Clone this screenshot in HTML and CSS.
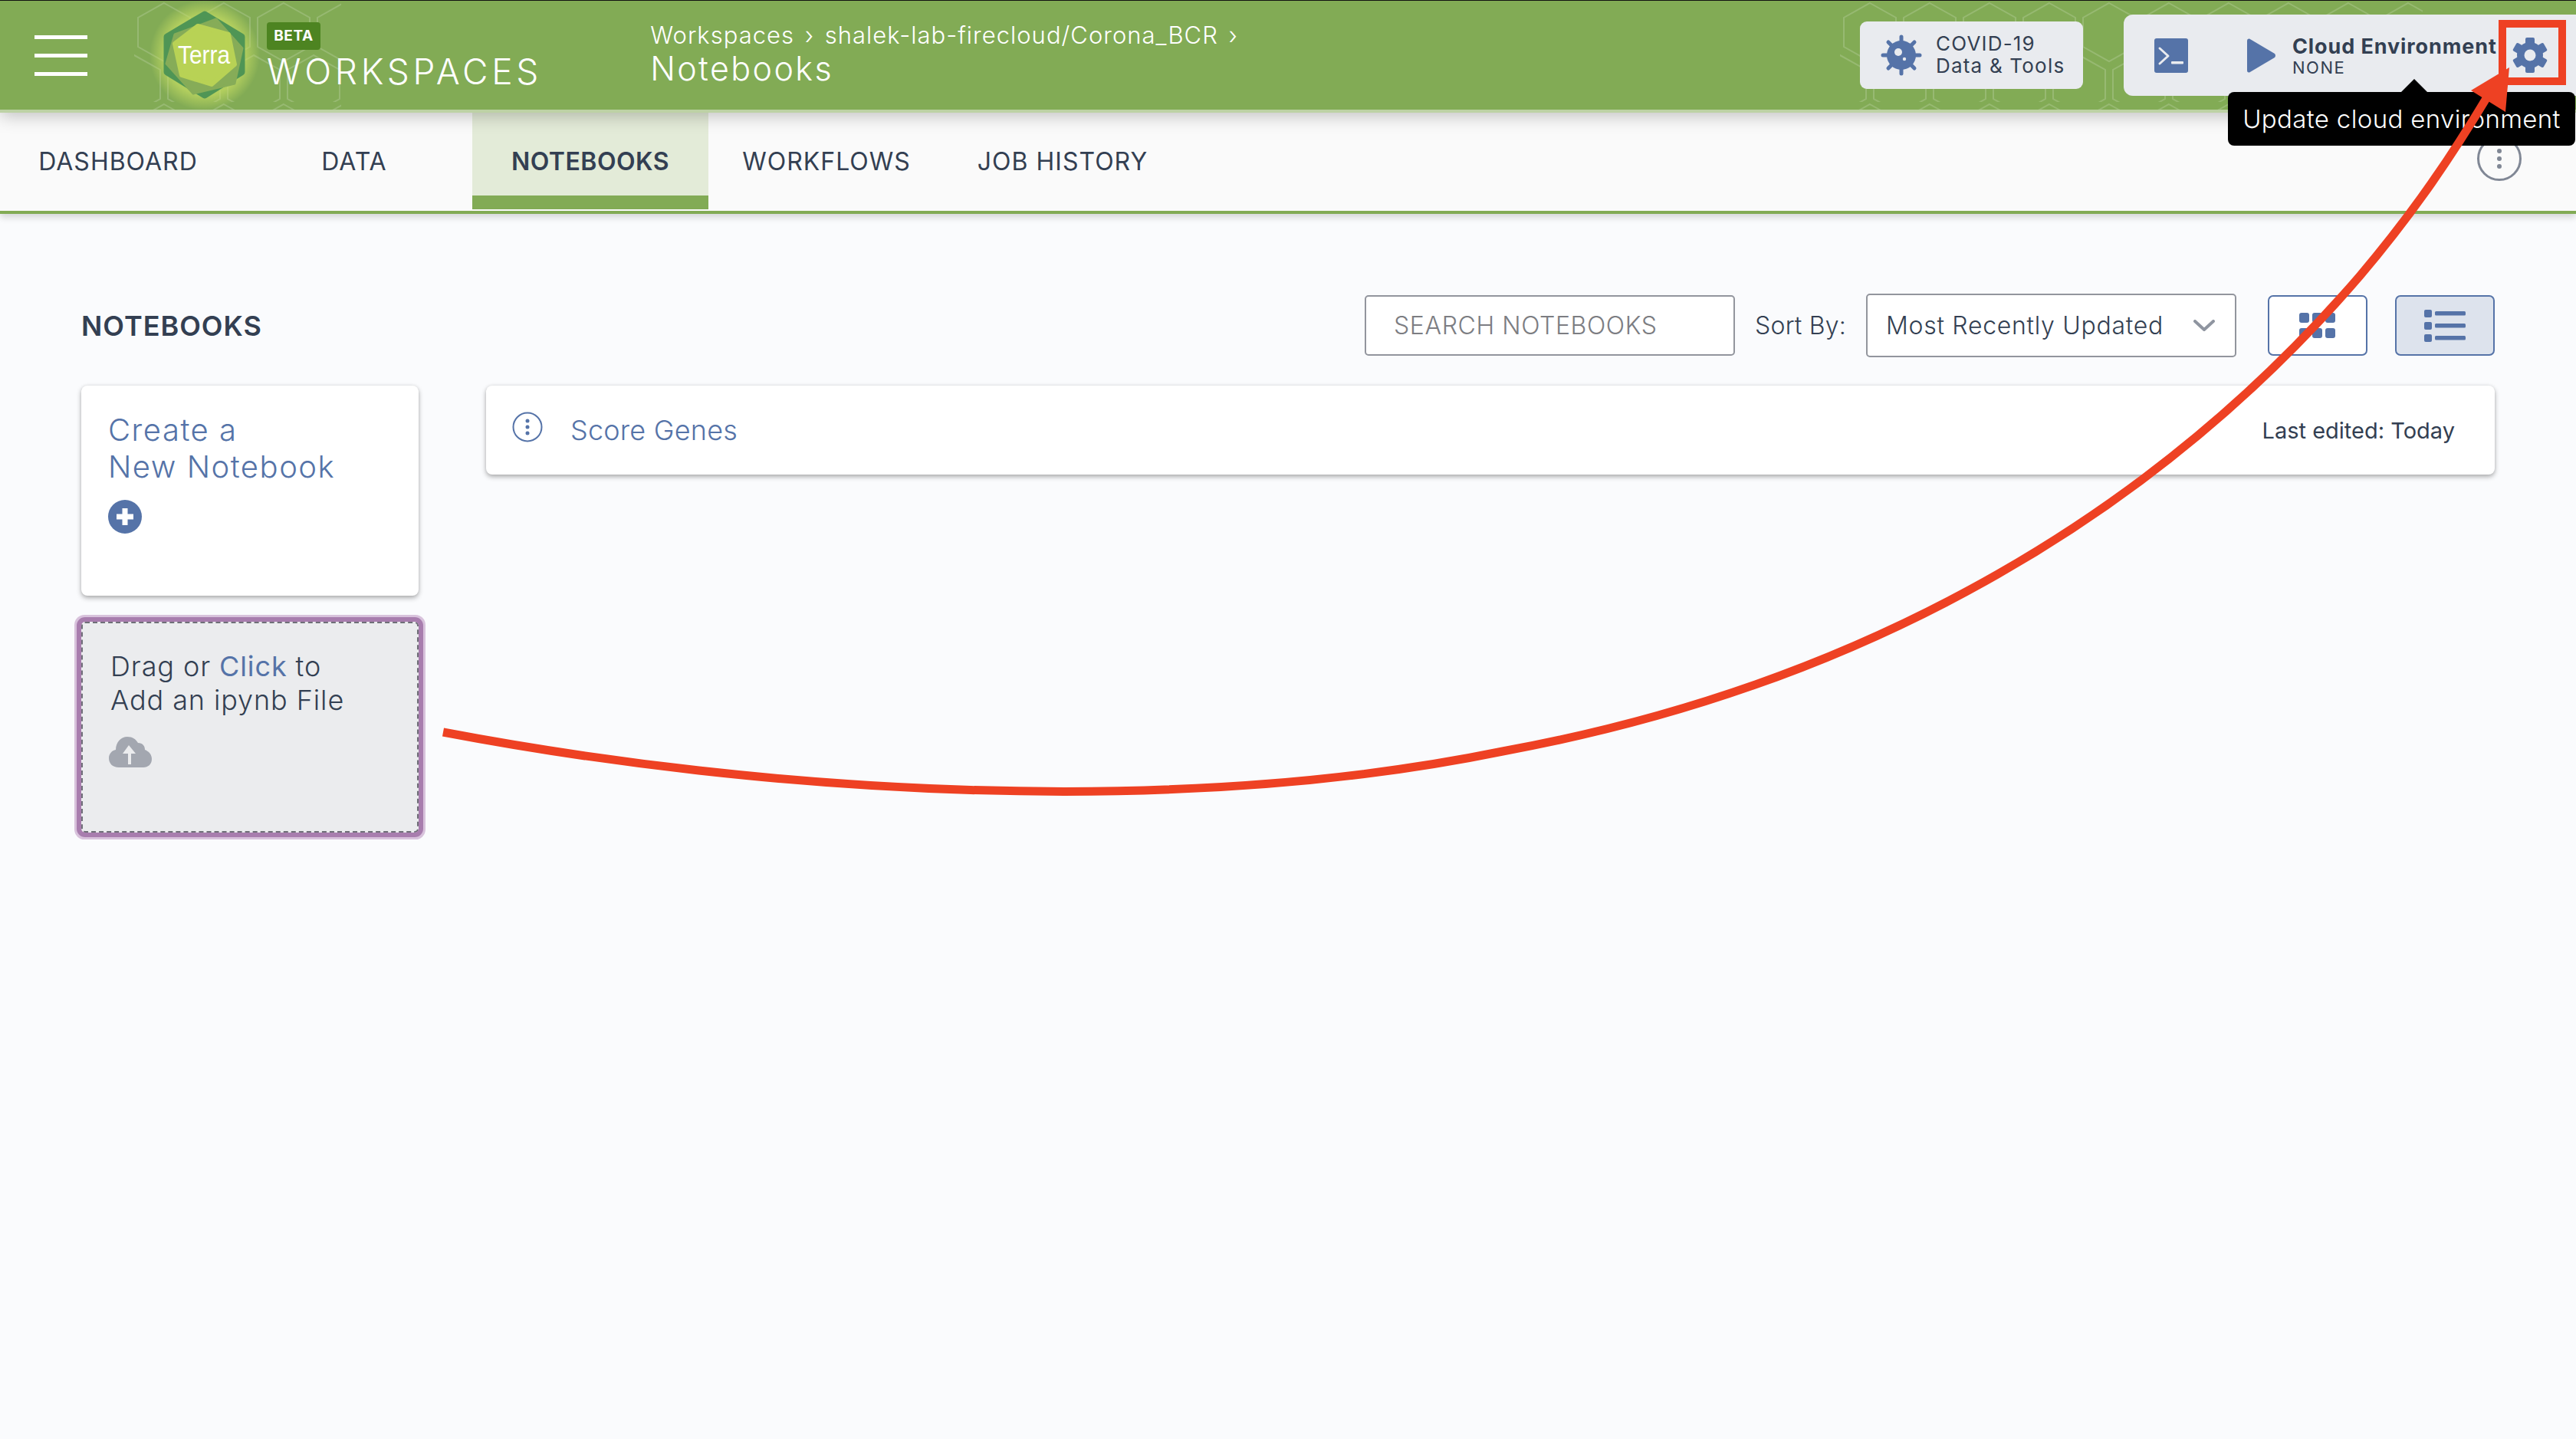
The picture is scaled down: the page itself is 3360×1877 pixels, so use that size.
FILE: index.html
```html
<!DOCTYPE html>
<html lang="en">
<head>
  <meta charset="UTF-8">
  <title>Notebooks</title>
  <link rel="stylesheet" href="styles.css">
</head>
<body>
  <header class="topbar">
    <svg class="hexes hexes-left" viewBox="0 0 270 142"><rect width="270" height="142" fill="url(#hexfill)"/></svg>
    <svg class="hexes hexes-right" viewBox="0 0 760 142"><rect width="760" height="142" fill="url(#hexfill)"/></svg>

    <div class="burger"><span></span><span></span><span></span></div>

    <svg class="logo" viewBox="214 13 106 116">
      <defs>
        <radialGradient id="glow">
          <stop offset="0.72" stop-color="#c6dd62" stop-opacity="0.7"/>
          <stop offset="1" stop-color="#c6dd62" stop-opacity="0"/>
        </radialGradient>
      </defs>
      <circle cx="267" cy="71" r="72" fill="url(#glow)"/>
      <polygon points="267,18 315,47 315,93 267,123 218,93 218,47" fill="#4f9555" stroke="#4f9555" stroke-width="9" stroke-linejoin="round"/>
      <polygon points="228,44 282,24 316,62 306,108 252,121 217,82" fill="#86ac58" stroke="#86ac58" stroke-width="3" stroke-linejoin="round"/>
      <polygon points="258,33 298,44 306,83 276,109 237,97 228,56" fill="#b8d255" stroke="#b8d255" stroke-width="6" stroke-linejoin="round"/>
      <text class="logo-word" x="232" y="82" textLength="68" lengthAdjust="spacingAndGlyphs">Terra</text>
    </svg>

    <div class="brand">
      <span class="beta">BETA</span>
      <span class="brand-name">WORKSPACES</span>
    </div>

    <div class="crumbs">
      <div class="crumb-path">Workspaces <span class="sep">›</span> shalek-lab-firecloud/Corona_BCR <span class="sep">›</span></div>
      <div class="crumb-page">Notebooks</div>
    </div>

    <a class="covid-btn">
      <svg class="virus" viewBox="0 0 54 54">
        <g stroke="#5573a8" stroke-width="5" stroke-linecap="round">
          <path d="M27 3V51M3 27H51M10 10L44 44M44 10L10 44"/>
        </g>
        <circle cx="27" cy="27" r="19" fill="#5573a8"/>
        <circle cx="23" cy="23" r="5" fill="#e9ebef"/>
        <circle cx="31" cy="32" r="2.2" fill="#e9ebef"/>
      </svg>
      <div class="covid-text">COVID-19<br>Data &amp; Tools</div>
    </a>

    <div class="cloud-panel">
      <svg class="terminal" viewBox="0 0 44 45">
        <rect width="44" height="45" rx="3" fill="#5573a8"/>
        <path d="M7 13L18 23L7 33" fill="none" stroke="#e9ebef" stroke-width="3" stroke-linecap="round" stroke-linejoin="round"/>
        <rect x="22" y="30" width="16" height="3.5" rx="1" fill="#e9ebef"/>
      </svg>
      <svg class="play" viewBox="0 0 38 45"><path d="M3 0.5 L36 20 Q38 22.500 36 25 L3 44.500 Q0 45 0 42 V3 Q0 0 3 0.5Z" fill="#5573a8"/></svg>
      <div class="cloud-text">
        <div class="cloud-title">Cloud Environment</div>
        <div class="cloud-status">NONE</div>
      </div>
      <svg class="gear" viewBox="-24 -24 48 48">
        <g fill="#5573a8">
          <circle r="17"/>
          <rect x="-6" y="-23" width="12" height="46" rx="2"/>
          <rect x="-6" y="-23" width="12" height="46" rx="2" transform="rotate(60)"/>
          <rect x="-6" y="-23" width="12" height="46" rx="2" transform="rotate(120)"/>
        </g>
        <circle r="7.500" fill="#e9ebef"/>
      </svg>
    </div>
  </header>

  <nav class="tabs">
    <a class="tab">DASHBOARD</a>
    <a class="tab">DATA</a>
    <a class="tab active">NOTEBOOKS</a>
    <a class="tab">WORKFLOWS</a>
    <a class="tab">JOB HISTORY</a>
    <div class="tab-menu"><i></i><i></i><i></i></div>
  </nav>

  <main class="content">
    <div class="toolbar">
      <h2>NOTEBOOKS</h2>
      <div class="search">SEARCH NOTEBOOKS</div>
      <span class="sort-label">Sort By:</span>
      <div class="select">
        <span>Most Recently Updated</span>
        <svg class="chevron" viewBox="0 0 28 16"><path d="M2 2L14 13L26 2" fill="none" stroke="#8f95a0" stroke-width="4" stroke-linecap="round" stroke-linejoin="round"/></svg>
      </div>
      <button class="view-btn">
        <svg class="grid-icon" viewBox="0 0 48 33">
          <rect width="13" height="13" rx="3"/><rect x="17" width="13" height="13" rx="3"/><rect x="34" width="13" height="13" rx="3"/>
          <rect y="20" width="13" height="13" rx="3"/><rect x="17" y="20" width="13" height="13" rx="3"/><rect x="34" y="20" width="13" height="13" rx="3"/>
        </svg>
      </button>
      <button class="view-btn selected">
        <svg class="list-icon" viewBox="0 0 54 42">
          <rect width="10" height="10" rx="2"/><rect x="14" y="2" width="40" height="5.500" rx="1.500"/>
          <rect y="16" width="10" height="10" rx="2"/><rect x="14" y="18" width="40" height="5.500" rx="1.500"/>
          <rect y="32" width="10" height="10" rx="2"/><rect x="14" y="34" width="40" height="5.500" rx="1.500"/>
        </svg>
      </button>
    </div>

    <div class="columns">
      <div class="left-col">
        <a class="card create-card">
          <div class="create-text">Create a<br>New Notebook</div>
          <svg class="plus" viewBox="0 0 44 44">
            <circle cx="22" cy="22" r="22" fill="#5573a8"/>
            <path d="M22 11V33M11 22H33" stroke="#fff" stroke-width="7"/>
          </svg>
        </a>
        <div class="dropzone">
          <div class="drop-text">Drag or <span class="link">Click</span> to<br>Add an ipynb File</div>
          <svg class="cloud" viewBox="0 0 56 40">
            <path d="M13 40C5 40 0 35 0 28C0 22 4 18 9 17C9 7 16 0 24 0C31 0 35 3 38 8C44 8 47 12 47 17C52 19 56 23 56 29C56 36 51 40 45 40Z" fill="#a3a7b0"/>
            <path d="M25 36V22H18L26 11L35 22H29V36Z" fill="#ebecee"/>
          </svg>
        </div>
      </div>

      <div class="right-col">
        <div class="card row-card">
          <svg class="info" viewBox="0 0 40 40">
            <circle cx="20" cy="20" r="18.500" fill="none" stroke="#5573a8" stroke-width="2"/>
            <g fill="#5573a8"><circle cx="20" cy="12" r="2.500"/><circle cx="20" cy="20" r="2.500"/><circle cx="20" cy="28" r="2.500"/></g>
          </svg>
          <a class="row-name">Score Genes</a>
          <span class="row-date">Last edited: Today</span>
        </div>
      </div>
    </div>
  </main>

  <div class="tooltip">Update cloud environment</div>

  <!-- red annotation drawn over the screenshot -->
  <svg class="annotation" viewBox="0 0 3360 1877">
    <defs>
      <pattern id="hexfill" width="78" height="132" patternUnits="userSpaceOnUse">
        <path d="M39 3L73 22V60L39 79L5 60V22Z M0 71L-34 90V128L0 147L34 128V90Z M78 71L44 90V128L78 147L112 128V90Z" fill="none" stroke="#fff" stroke-opacity="0.17" stroke-width="2"/>
      </pattern>
    </defs>
    <rect x="3264" y="31" width="78" height="75" fill="none" stroke="#ee4123" stroke-width="10"/>
    <path d="M578 955C1000 1035 1530 1068 1960 980C2450 890 2820 660 3078 360C3150 275 3200 200 3245 125" fill="none" stroke="#ee4123" stroke-width="11"/>
    <polygon points="3273,88 3223,118 3268,146" fill="#ee4123"/>
  </svg>
</body>
</html>
```

FILE: styles.css
```css
* {
  box-sizing: border-box;
}
body {
  font-family: Inter, 'Noto Sans', sans-serif;
  font-weight: 300;
  background-color: #fafbfd;
  color: #333f52;
  margin: 0;
  height: 1877px;
  overflow: hidden;
  position: relative;
}

/* top green bar */
.topbar {
  height: 147px;
  background-color: #82ab55;
  border-top: 1px solid #111;
  border-bottom: 4px solid #bdd2a5;
  box-shadow: 0 4px 22px rgba(0, 0, 0, 0.24);
  display: flex;
  align-items: center;
  position: relative;
  z-index: 1;
}
.hexes {
  position: absolute;
  top: 0;
  height: 142px;
}
.hexes-left {
  left: 175px;
  width: 270px;
}
.hexes-right {
  left: 2400px;
  width: 760px;
}
.burger {
  width: 69px;
  margin-left: 45px;
  display: flex;
  flex-direction: column;
  gap: 19px;
  position: relative;
}
.burger span {
  height: 5px;
  background-color: #fff;
}
.logo {
  width: 106px;
  height: 116px;
  margin-left: 100px;
  overflow: visible;
  position: relative;
}
.logo-word {
  font-family: 'Liberation Sans Narrow', 'Liberation Sans', sans-serif;
  font-size: 34px;
  fill: #fff;
}
.brand {
  margin-left: 28px;
  display: flex;
  flex-direction: column;
  align-items: flex-start;
  color: #fff;
  position: relative;
}
.beta {
  width: 70px;
  height: 36px;
  line-height: 36px;
  text-align: center;
  background-color: #4d8421;
  border-radius: 4px;
  font-size: 19px;
  font-weight: 700;
  letter-spacing: 0.6px;
}
.brand-name {
  font-size: 46px;
  line-height: 44px;
  margin-top: 6px;
  letter-spacing: 4.7px;
}
.crumbs {
  margin-left: 141px;
  margin-top: -9px;
  color: #fff;
  position: relative;
}
.crumb-path {
  font-size: 31px;
  line-height: 42px;
  letter-spacing: 1px;
}
.crumb-path .sep {
  margin: 0 4px;
}
.crumb-page {
  font-size: 43px;
  line-height: 44px;
  letter-spacing: 2.4px;
}
.covid-btn {
  margin-left: auto;
  width: 291px;
  height: 88px;
  background-color: #e9ebef;
  border-radius: 9px;
  display: flex;
  align-items: center;
  padding-left: 27px;
  position: relative;
}
.virus {
  width: 54px;
  height: 54px;
}
.covid-text {
  margin-left: 18px;
  font-size: 26px;
  line-height: 29px;
  font-weight: 400;
  letter-spacing: 1.2px;
  margin-top: -3px;
}
.cloud-panel {
  margin-left: 53px;
  width: 590px;
  height: 106px;
  background-color: #e9ebef;
  border-radius: 12px 0 0 12px;
  display: flex;
  align-items: center;
  padding-left: 40px;
  position: relative;
}
.terminal {
  width: 44px;
  height: 45px;
}
.play {
  width: 38px;
  height: 45px;
  margin-left: 77px;
}
.cloud-text {
  margin-left: 21px;
  width: 270px;
  white-space: nowrap;
}
.cloud-title {
  font-size: 27px;
  line-height: 32px;
  font-weight: 700;
  letter-spacing: 0.9px;
}
.cloud-status {
  font-size: 22px;
  line-height: 22px;
  font-weight: 400;
  letter-spacing: 1.5px;
}
.gear {
  width: 48px;
  height: 48px;
  margin-left: 16px;
}

/* tabs */
.tabs {
  height: 132px;
  background-color: #fafafa;
  border-bottom: 4px solid #82ab55;
  display: flex;
  align-items: flex-start;
  box-shadow: 0 5px 8px rgba(0, 0, 0, 0.14);
  position: relative;
}
.tab {
  width: 308px;
  height: 108px;
  padding-top: 42px;
  text-align: center;
  font-size: 32px;
  line-height: 44px;
  font-weight: 400;
  letter-spacing: 1px;
}
.tab.active {
  height: 126px;
  background-color: #e3ebd8;
  border-bottom: 18px solid #82ab55;
  font-weight: 600;
  letter-spacing: 0.5px;
}
.tab-menu {
  width: 58px;
  height: 58px;
  margin: 31px 71px 0 auto;
  border: 3px solid #808795;
  border-radius: 50%;
  display: flex;
  flex-direction: column;
  align-items: center;
  justify-content: center;
  gap: 4px;
}
.tab-menu i {
  width: 6px;
  height: 6px;
  border-radius: 50%;
  background-color: #808795;
}

/* notebooks area */
.content {
  padding: 104px 106px 0;
}
.toolbar {
  height: 83px;
  display: flex;
  align-items: center;
}
.toolbar h2 {
  margin: 0 auto 0 0;
  font-size: 36px;
  font-weight: 600;
  letter-spacing: 1px;
}
.search {
  width: 483px;
  height: 79px;
  background-color: #fff;
  border: 2px solid #92959d;
  border-radius: 5px;
  padding-left: 36px;
  line-height: 75px;
  font-size: 32px;
  color: #7c7d82;
  letter-spacing: 0.6px;
}
.sort-label {
  margin: 0 26px;
  font-size: 32px;
  letter-spacing: 0.2px;
}
.select {
  width: 483px;
  height: 83px;
  background-color: #fff;
  border: 2px solid #92959d;
  border-radius: 5px;
  padding: 0 26px 0 24px;
  font-size: 32px;
  letter-spacing: 0.7px;
  display: flex;
  align-items: center;
  justify-content: space-between;
}
.chevron {
  width: 28px;
  height: 16px;
}
.view-btn {
  width: 130px;
  height: 79px;
  margin-left: 41px;
  padding: 0;
  background-color: #fff;
  border: 2px solid #5573a8;
  border-radius: 7px;
  display: flex;
  align-items: center;
  justify-content: center;
}
.view-btn.selected {
  margin-left: 36px;
  background-color: #dde3ed;
}
.grid-icon {
  width: 48px;
  height: 33px;
  fill: #5573a8;
}
.list-icon {
  width: 54px;
  height: 42px;
  fill: #5573a8;
}
.columns {
  margin-top: 37px;
  display: flex;
  gap: 88px;
  align-items: flex-start;
}
.left-col {
  width: 440px;
}
.right-col {
  flex: 1;
}
.card {
  background-color: #fff;
  border-radius: 8px;
  box-shadow: 0 3px 6px rgba(0, 0, 0, 0.3), 0 0 4px rgba(0, 0, 0, 0.08);
}
.create-card {
  display: block;
  height: 274px;
  padding: 34px 35px;
  color: #5573a8;
}
.create-text {
  font-size: 40px;
  line-height: 48px;
  letter-spacing: 1.5px;
}
.plus {
  display: block;
  width: 44px;
  height: 44px;
  margin-top: 19px;
}
.dropzone {
  height: 275px;
  margin-top: 34px;
  padding: 34px 36px;
  background-color: #ebecee;
  border: 2px dashed #6f6f78;
  border-radius: 5px;
  outline: 6px solid #a87dae;
  outline-offset: 0;
  box-shadow: 0 0 0 9px #d8c2dc;
}
.drop-text {
  font-size: 36px;
  line-height: 44px;
  letter-spacing: 0.9px;
}
.link {
  color: #5573a8;
  font-weight: 400;
}
.cloud {
  display: block;
  width: 56px;
  height: 40px;
  margin-top: 26px;
  margin-left: -2px;
}
.row-card {
  height: 116px;
  display: flex;
  align-items: center;
  padding: 0 52px 0 34px;
}
.info {
  width: 40px;
  height: 40px;
  margin-top: -8px;
}
.row-name {
  margin-left: 36px;
  font-size: 36px;
  color: #5573a8;
  letter-spacing: 0.2px;
}
.row-date {
  margin-left: auto;
  font-size: 29px;
  font-weight: 400;
}

/* overlays */
.tooltip {
  position: absolute;
  left: 2906px;
  top: 120px;
  width: 453px;
  height: 70px;
  background-color: #000;
  border-radius: 8px;
  color: #fff;
  font-size: 33px;
  line-height: 70px;
  letter-spacing: 0.36px;
  text-align: center;
  white-space: nowrap;
  z-index: 2;
}
.tooltip::before {
  content: "";
  position: absolute;
  left: 226px;
  top: -17px;
  border-left: 17px solid transparent;
  border-right: 17px solid transparent;
  border-bottom: 17px solid #000;
}
.annotation {
  position: absolute;
  left: 0;
  top: 0;
  width: 3360px;
  height: 1877px;
  pointer-events: none;
  z-index: 3;
}
```
